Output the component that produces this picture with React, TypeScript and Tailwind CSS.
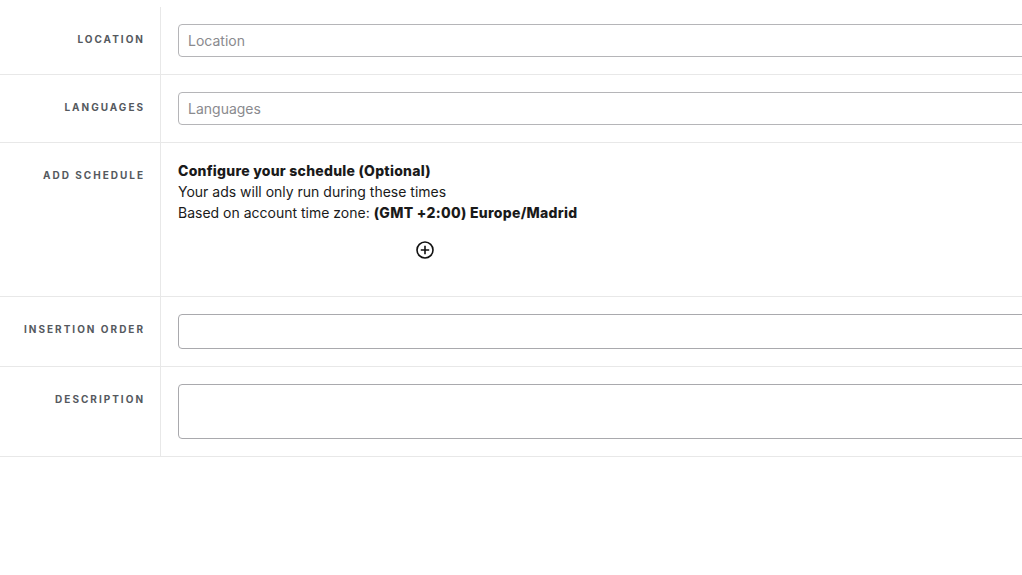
import React from "react";

const font = { fontFamily: "Inter, 'Liberation Sans', sans-serif" };

function Label({ children }: { children: React.ReactNode }) {
  return (
    <div className="w-[161px] shrink-0 border-r border-[#e8e8e8] pr-[15px] pt-[24px] text-right text-[10px] leading-[16px] font-bold tracking-[2px] text-[#55595e] uppercase">
      {children}
    </div>
  );
}

function Row({ label, children }: { label: string; children: React.ReactNode }) {
  return (
    <div className="flex border-b border-[#e8e8e8]">
      <Label>{label}</Label>
      <div className="flex-1 min-w-0 pl-[17px] pt-[17px] pb-[17px]">{children}</div>
    </div>
  );
}

export default function App() {
  return (
    <div className="w-[1022px] h-[575px] overflow-hidden bg-white pt-[7px]" style={font}>
      <div className="w-[1022px]">
        <Row label="Location">
          <input
            placeholder="Location"
            className="block w-[900px] h-[33px] rounded-[4px] border border-[#b5b5b8] px-[9px] text-[14px] text-[#222] placeholder-[#8a8a8e] outline-none"
          />
        </Row>
        <Row label="Languages">
          <input
            placeholder="Languages"
            className="block w-[900px] h-[33px] rounded-[4px] border border-[#b5b5b8] px-[9px] text-[14px] text-[#222] placeholder-[#8a8a8e] outline-none"
          />
        </Row>
        <div className="flex border-b border-[#e8e8e8] h-[154px]">
          <Label>Add schedule</Label>
          <div className="flex-1 min-w-0 pl-[17px] pt-[17px]">
            <div className="text-[14px] leading-[21px] text-[#1a1a1a]">
              <div className="font-extrabold tracking-[0.25px]">Configure your schedule (Optional)</div>
              <div>Your ads will only run during these times</div>
              <div>
                Based on account time zone: <span className="font-extrabold tracking-[0.3px]">(GMT +2:00) Europe/Madrid</span>
              </div>
            </div>
            <div className="mt-[18px] ml-[238px] w-[18px] h-[18px]">
              <svg width="18" height="18" viewBox="0 0 18 18" fill="none" stroke="#111" strokeWidth="1.6">
                <circle cx="9" cy="9" r="8" />
                <path d="M9 4.8v8.4M4.8 9h8.4" />
              </svg>
            </div>
          </div>
        </div>
        <Row label="Insertion order">
          <input className="block w-[900px] h-[35px] rounded-[4px] border border-[#a9a9ad] px-[9px] text-[14px] outline-none" />
        </Row>
        <Row label="Description">
          <textarea className="block w-[900px] h-[55px] resize-none rounded-[4px] border border-[#a9a9ad] px-[9px] text-[14px] outline-none" />
        </Row>
      </div>
    </div>
  );
}
